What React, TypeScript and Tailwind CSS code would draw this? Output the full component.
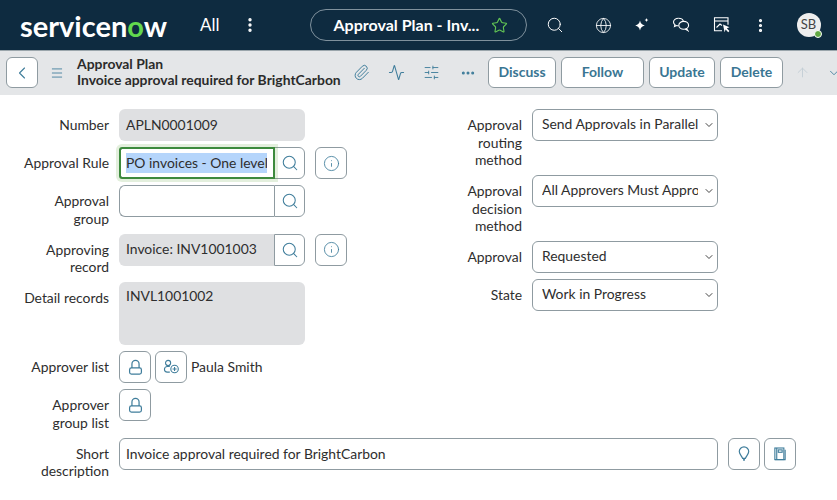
import { ChevronDown, ChevronLeft, Info, MoreHorizontal, MoreVertical, Search, Star, Globe, ArrowUp, Menu, Paperclip, Activity, SlidersHorizontal } from "lucide-react";
import type { ReactNode } from "react";

const teal = "text-[#3f7d9b]";

function LockIcon() {
  return (
    <svg width="15" height="17" viewBox="0 0 16 18" fill="none" stroke="currentColor" strokeWidth="1.3">
      <path d="M4.200 9.500V5.200a3.800 3.800 0 0 1 7.600 0v4.300" />
      <rect x="1.700" y="9.500" width="12.600" height="6.500" rx="2" />
    </svg>
  );
}

function AddUserIcon() {
  return (
    <svg width="17" height="16" viewBox="0 0 20 18" fill="none" stroke="currentColor" strokeWidth="1.3">
      <circle cx="6" cy="4.200" r="3" />
      <path d="M8 8.400H5a3.200 3.200 0 0 0 0 6.600h3" />
      <circle cx="13.600" cy="11.400" r="4.400" />
      <path d="M13.600 9v4.800M11.200 11.400H16" />
    </svg>
  );
}

function BulbIcon() {
  return (
    <svg width="12" height="16" viewBox="0 0 14 19" fill="none" stroke="currentColor" strokeWidth="1.4">
      <path d="M7 1a5.600 5.600 0 0 0-5.600 5.600c0 2.800 2.600 5 3.900 8h3.400c1.300-3 3.900-5.200 3.900-8A5.600 5.600 0 0 0 7 1Z" />
      <path d="M5.800 16.500h2.400" strokeWidth="1.800" />
    </svg>
  );
}

function BookIcon() {
  return (
    <svg width="12" height="14" viewBox="0 0 14 16" fill="none" stroke="currentColor" strokeWidth="1.3">
      <rect x="1" y="1" width="10.500" height="13.500" />
      <path d="M3.200 1v13.500M1 14.500h12V3" />
      <rect x="5" y="3.200" width="4.500" height="2.800" />
    </svg>
  );
}

function SparkleIcon() {
  return (
    <svg width="18" height="18" viewBox="0 0 18 18" fill="white">
      <path d="M7 4.500c.7 3 1.800 4.200 4.800 5-3 .8-4.100 2-4.800 5-.7-3-1.800-4.200-4.800-5 3-.8 4.100-2 4.800-5Z" />
      <path d="M13.500 2c.3 1.300.8 1.800 2 2.100-1.200.3-1.700.8-2 2.100-.3-1.300-.8-1.800-2-2.100 1.200-.3 1.700-.8 2-2.100Z" />
    </svg>
  );
}

function ChatIcon() {
  return (
    <svg width="18" height="16" viewBox="0 0 18 16" fill="none" stroke="white" strokeWidth="1.100">
      <path d="M6.500 1.200c-2.900 0-5 1.700-5 3.800 0 1.100.6 2.100 1.500 2.800l-.5 1.800 2.200-1c.6.200 1.200.2 1.800.2" />
      <path d="M6.500 1.200c2.500 0 4.300 1.200 4.800 2.800" />
      <ellipse cx="11.700" cy="8.300" rx="4.900" ry="3.900" />
      <path d="M14.500 11.500l1.300 2-2.800-1.400" />
    </svg>
  );
}

function WindowCursorIcon() {
  return (
    <svg width="18" height="18" viewBox="0 0 18 18" fill="none" stroke="white" strokeWidth="1.100">
      <path d="M9 14.800H1.500V1.800h13.500v7" />
      <path d="M1.500 5h13.500" />
      <path d="M3.500 11.500 7 8l2 1.500" />
      <path d="M10 8.500l6.500 2.800-2.700 1 2.600 2.700-1.200 1.200-2.600-2.700-1 2.700Z" fill="white" stroke="none" />
    </svg>
  );
}

function Row({ label, children }: { label: ReactNode; children: ReactNode }) {
  return (
    <div className="flex items-start gap-[10px]">
      <div className="w-[109px] shrink-0 pt-[7px] pb-[0.5px] text-right leading-[17.5px]">{label}</div>
      {children}
    </div>
  );
}

function SelectRow({ label, value }: { label: ReactNode; value: string }) {
  return (
    <div className="flex items-start gap-[10px]">
      <div className="w-[56px] shrink-0 pt-[7px] pb-[0.5px] text-right leading-[17.5px]">{label}</div>
      <div className="relative h-[32px] w-[186px]">
        <select
          defaultValue={value}
          className="h-full w-full appearance-none rounded-[6px] border border-[#8f9ba1] bg-white pb-[2px] pl-[9px] pr-[19px] outline-none"
        >
          <option>{value}</option>
        </select>
        <ChevronDown className="pointer-events-none absolute right-[3px] top-[10px] text-[#444]" size={12} />
      </div>
    </div>
  );
}

function IconBox({ children, className = "" }: { children: ReactNode; className?: string }) {
  return (
    <button className={`flex h-[32px] w-[32px] shrink-0 items-center justify-center rounded-[6px] border border-[#8f9ba1] bg-white ${teal} ${className}`}>
      {children}
    </button>
  );
}

function ReadOnlyField({ value, className = "" }: { value: string; className?: string }) {
  return (
    <div className={`flex items-center bg-[#dfe0e2] pl-[7px] ${className}`}>{value}</div>
  );
}

function LookupField({ children, gray = false }: { children?: ReactNode; gray?: boolean }) {
  return (
    <div className="flex h-[32px] w-[186px]">
      <div className={`flex flex-1 items-center rounded-l-[6px] border border-r-0 pl-[6px] ${gray ? "border-[#dfe0e2] bg-[#dfe0e2]" : "border-[#8f9ba1] bg-white"}`}>
        {children}
      </div>
      <button className={`flex w-[31px] items-center justify-center rounded-r-[6px] border border-[#8f9ba1] bg-white ${teal}`}>
        <Search size={18} strokeWidth={1.400} />
      </button>
    </div>
  );
}

function ActionButton({ label, width }: { label: string; width: string }) {
  return (
    <button className={`h-[31px] rounded-[6px] border border-[#8f9ba1] bg-white pb-[2px] text-[14px] font-bold text-[#3a7693] ${width}`}>
      {label}
    </button>
  );
}

export default function App() {
  return (
    <div className="h-[500px] w-[837px] overflow-hidden bg-white text-[13.9px] text-[#2e2e2e] [font-family:Lato,sans-serif]">
      <header className="flex h-[51px] items-center border-b border-[#9aa5ab] bg-[#0e2b40] text-white">
        <div className="ml-[20px] w-[147px] whitespace-nowrap text-[29px] font-bold leading-none">
          servicen<span className="text-[#62d84e]">o</span>w
        </div>
        <span className="ml-[33px] text-[17px]">All</span>
        <MoreVertical className="ml-[21px]" size={18} strokeWidth={2.500} />
        <div className="ml-[51px] flex h-[32px] w-[217px] items-center rounded-full border border-[#7f919d] pl-[23px]">
          <span className="w-[157px] whitespace-nowrap text-[16px] font-bold">Approval Plan - Inv...</span>
          <Star className="text-[#62c454]" size={17} strokeWidth={1.600} />
        </div>
        <Search className="ml-[19px]" size={18} strokeWidth={1.300} />
        <Globe className="ml-[31px]" size={17} strokeWidth={1.200} />
        <span className="ml-[21px]"><SparkleIcon /></span>
        <span className="ml-[21px]"><ChatIcon /></span>
        <span className="ml-[23px]"><WindowCursorIcon /></span>
        <MoreVertical className="ml-[21px]" size={17} strokeWidth={2.500} />
        <div className="relative ml-[28px] flex h-[24px] w-[24px] items-center justify-center rounded-full bg-[#eeeeee] text-[13px] text-[#444]">
          SB
          <span className="absolute -bottom-[1px] -right-[1px] h-[8px] w-[8px] rounded-full border border-white bg-[#62a844]" />
        </div>
      </header>

      <div className="flex h-[44px] items-center overflow-hidden bg-[#e4e6e8] pb-[1px]">
        <button className={`ml-[6px] flex h-[31px] w-[32px] shrink-0 items-center justify-center rounded-[6px] border border-[#8f9ba1] bg-white ${teal}`}>
          <ChevronLeft size={20} strokeWidth={1.300} />
        </button>
        <Menu className={`ml-[12px] shrink-0 ${teal}`} size={14} strokeWidth={1.500} />
        <div className="ml-[13px] w-[276px] shrink-0 whitespace-nowrap pb-[1px] text-[13.9px] font-bold leading-[16px] text-[#2b2b2b]">
          <div>Approval Plan</div>
          <div>Invoice approval required for BrightCarbon</div>
        </div>
        <Paperclip className={`shrink-0 ${teal}`} size={17} strokeWidth={1.400} />
        <Activity className={`ml-[18px] shrink-0 ${teal}`} size={17} strokeWidth={1.500} />
        <SlidersHorizontal className={`ml-[18px] shrink-0 ${teal}`} size={17} strokeWidth={1.300} />
        <MoreHorizontal className={`ml-[20px] shrink-0 ${teal}`} size={16} strokeWidth={2.500} />
        <div className="ml-[12px] flex shrink-0 gap-[5px]">
          <ActionButton label="Discuss" width="w-[68px]" />
          <ActionButton label="Follow" width="w-[83px]" />
          <ActionButton label="Update" width="w-[66px]" />
          <ActionButton label="Delete" width="w-[63px]" />
        </div>
        <ArrowUp className="ml-[12px] shrink-0 text-[#c3ced5]" size={15} strokeWidth={1.500} />
        <ChevronDown className={`ml-[17px] shrink-0 ${teal}`} size={14} strokeWidth={1.500} />
      </div>

      <main className="flex pt-[14px]">
        <div className="flex w-[466px] shrink-0 flex-col gap-[6px]">
          <Row label="Number">
            <ReadOnlyField value="APLN0001009" className="h-[32px] w-[186px] rounded-[6px]" />
          </Row>
          <Row label="Approval Rule">
            <div className="relative">
              <LookupField>
                <span className="w-[141px] overflow-hidden whitespace-nowrap bg-[#b5d5fb]">PO invoices - One level</span>
              </LookupField>
              <div className="pointer-events-none absolute left-0 top-0 h-[32px] w-[156px] rounded-l-[3px] border-2 border-[#3d8a3d] shadow-[0_0_0_3px_rgba(98,168,68,0.18)]" />
            </div>
            <IconBox><Info size={17} strokeWidth={1.200} /></IconBox>
          </Row>
          <Row label={<>Approval<br />group</>}>
            <LookupField />
          </Row>
          <Row label={<>Approving<br />record</>}>
            <LookupField gray>Invoice: INV1001003</LookupField>
            <IconBox><Info size={17} strokeWidth={1.200} /></IconBox>
          </Row>
          <Row label="Detail records">
            <div className="h-[63px] w-[186px] rounded-[6px] bg-[#dfe0e2] pl-[7px] pt-[4px]">INVL1001002</div>
          </Row>
          <Row label="Approver list">
            <div className="flex items-center gap-[4px]">
              <IconBox><LockIcon /></IconBox>
              <IconBox><AddUserIcon /></IconBox>
              <span>Paula Smith</span>
            </div>
          </Row>
          <Row label={<>Approver<br />group list</>}>
            <IconBox><LockIcon /></IconBox>
          </Row>
        </div>
        <div className="flex flex-col gap-[6px]">
          <SelectRow label={<>Approval<br />routing<br />method</>} value="Send Approvals in Parallel" />
          <SelectRow label={<>Approval<br />decision<br />method</>} value="All Approvers Must Approve" />
          <SelectRow label="Approval" value="Requested" />
          <SelectRow label="State" value="Work in Progress" />
        </div>
      </main>

      <div className="mt-[6px]">
        <Row label={<>Short<br />description</>}>
          <input
            readOnly
            defaultValue="Invoice approval required for BrightCarbon"
            className="h-[32px] w-[599px] rounded-[6px] border border-[#8f9ba1] bg-white pl-[6px] outline-none"
          />
          <IconBox><BulbIcon /></IconBox>
          <IconBox className="-ml-[6px]"><BookIcon /></IconBox>
        </Row>
      </div>
    </div>
  );
}
